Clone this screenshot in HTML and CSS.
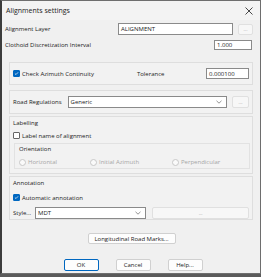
FILE: index.html
```html
<!DOCTYPE html>
<html lang="en">
<head>
    <meta charset="UTF-8">
    <title>Alignments settings</title>
    <link rel="stylesheet" href="styles.css">
</head>
<body>
    <div class="dialog">
        <div class="titlebar">
            <span class="title">Alignments settings</span>
            <svg class="close" width="8" height="8" viewBox="0 0 8 8"><path d="M0.5 0.5L7.5 7.5M7.5 0.5L0.5 7.5" stroke="#333" stroke-width="0.9"/></svg>
        </div>

        <div class="content">
            <div class="row row-layer">
                <span class="label">Alignment Layer</span>
                <div class="field layer-field">ALIGNMENT</div>
                <div class="btn dots off">...</div>
            </div>

            <div class="row row-clothoid">
                <span class="label">Clothoid Discretization Interval</span>
                <div class="field short-field">1.000</div>
            </div>

            <div class="group group-azimuth">
                <div class="check"><span class="box on"><svg width="7" height="7" viewBox="0 0 7 7"><path d="M1.3 3.6L2.8 5L5.7 1.9" fill="none" stroke="#fff" stroke-width="1"/></svg></span>Check Azimuth Continuity</div>
                <span class="tol-label">Tolerance</span>
                <div class="field tol-field">0.000100</div>
            </div>

            <div class="group group-road">
                <span class="label">Road Regulations</span>
                <div class="field combo road-combo">Generic<svg class="chev" width="6" height="4" viewBox="0 0 6 4"><path d="M0.5 0.8L3 3.2L5.5 0.8" fill="none" stroke="#777" stroke-width="0.8"/></svg></div>
                <div class="btn dots off">...</div>
            </div>

            <div class="group group-label">
                <div class="legend">Labelling</div>
                <div class="check"><span class="box"></span>Label name of alignment</div>
                <div class="subgroup">
                    <div class="legend">Orientation</div>
                    <div class="radios">
                        <div class="radio"><span class="dot"></span>Horizontal</div>
                        <div class="radio"><span class="dot"></span>Initial Azimuth</div>
                        <div class="radio"><span class="dot"></span>Perpendicular</div>
                    </div>
                </div>
            </div>

            <div class="group group-annot">
                <div class="legend">Annotation</div>
                <div class="check"><span class="box on"><svg width="7" height="7" viewBox="0 0 7 7"><path d="M1.3 3.6L2.8 5L5.7 1.9" fill="none" stroke="#fff" stroke-width="1"/></svg></span>Automatic annotation</div>
                <div class="style-row">
                    <span class="label">Style...</span>
                    <div class="field combo style-combo">MDT<svg class="chev" width="6" height="4" viewBox="0 0 6 4"><path d="M0.5 0.8L3 3.2L5.5 0.8" fill="none" stroke="#777" stroke-width="0.8"/></svg></div>
                    <div class="btn style-btn off">...</div>
                </div>
            </div>

            <div class="marks-row">
                <div class="btn marks-btn">Longitudinal Road Marks...</div>
            </div>

            <div class="actions">
                <div class="btn action default">OK</div>
                <div class="btn action">Cancel</div>
                <div class="btn action">Help...</div>
            </div>
        </div>
    </div>
</body>
</html>
```

FILE: styles.css
```css
* {
    margin: 0;
    padding: 0;
    box-sizing: border-box;
}

body {
    background: #5a5a5a;
    font-family: "Open Sans", "Noto Sans", sans-serif;
    font-size: 6px;
    color: #222;
}

.dialog {
    width: 261px;
    height: 274px;
    background: #f0f0f0;
    border: 1px solid #6e6e6e;
    border-left: 2px solid #3c3c3c;
    display: flex;
    flex-direction: column;
}

.titlebar {
    height: 19px;
    display: flex;
    align-items: center;
    justify-content: space-between;
    padding: 0 7px 0 4px;
    background: #f3f3f3;
}

.title {
    font-size: 7px;
}

.content {
    padding: 0 6px 0 3px;
    display: flex;
    flex-direction: column;
}

.row {
    display: flex;
    align-items: center;
}

.label {
    white-space: nowrap;
}

.row-layer {
    margin-top: 3px;
    height: 12px;
}

.row-clothoid {
    margin-top: 5px;
    height: 10px;
}

.field {
    background: #fff;
    border: 1px solid #8a8a8a;
    height: 100%;
    display: flex;
    align-items: center;
    padding-left: 2px;
    white-space: nowrap;
}

.layer-field {
    margin-left: auto;
    width: 115px;
}

.short-field {
    margin-left: auto;
    width: 38px;
    margin-right: 2px;
}

.btn {
    background: #fdfdfd;
    border: 1px solid #d0d0d0;
    border-radius: 2px;
    display: flex;
    align-items: center;
    justify-content: center;
    white-space: nowrap;
}

.btn.off {
    color: #a8a8a8;
    background: #f7f7f7;
    border-color: #e0e0e0;
}

.dots {
    width: 15px;
    height: 11px;
    margin-left: 5px;
    font-size: 5px;
}

.row-layer .dots {
    margin-right: 1px;
}

.group {
    border: 1px solid #dedede;
    background: #f2f2f2;
    margin-left: 4px;
    margin-right: 1px;
}

.group-azimuth {
    margin-top: 12px;
    height: 23px;
    display: flex;
    align-items: center;
    padding: 0 3px 0 3px;
}

.check {
    display: flex;
    align-items: center;
    white-space: nowrap;
}

.box {
    width: 7px;
    height: 7px;
    border: 1px solid #666;
    border-radius: 1px;
    background: #fff;
    margin-right: 2px;
    display: flex;
    align-items: center;
    justify-content: center;
}

.box.on {
    background: #0067c0;
    border-color: #0067c0;
}

.tol-label {
    margin-left: 43px;
}

.tol-field {
    margin-left: auto;
    width: 43px;
    height: 11px;
}

.group-road {
    margin-top: 5px;
    height: 24px;
    display: flex;
    align-items: center;
    padding: 0 3px 0 3px;
}

.combo {
    position: relative;
    height: 12px;
}

.chev {
    position: absolute;
    right: 4px;
    top: 3px;
}

.road-combo {
    margin-left: 6px;
    width: 161px;
}

.group-road .dots {
    height: 12px;
    width: 17px;
}

.group-label {
    margin-top: 2px;
    height: 58px;
    padding: 2px 3px 0 3px;
}

.legend {
    line-height: 9px;
}

.group-label > .check {
    margin-top: 3px;
    height: 9px;
}

.subgroup {
    margin-top: 3px;
    border: 1px solid #e2e2e2;
    height: 26px;
    padding: 1px 3px 0 4px;
    margin-left: 1px;
    margin-right: -1px;
}

.radios {
    display: flex;
    margin-top: 4px;
    color: #a6a6a6;
}

.radio {
    display: flex;
    align-items: center;
    width: 71px;
}

.radio:nth-child(2) {
    width: 82px;
}

.dot {
    width: 7px;
    height: 7px;
    border: 1px solid #c8c8c8;
    border-radius: 50%;
    background: #fafafa;
    margin-right: 2px;
}

.group-annot {
    margin-top: 2px;
    height: 44px;
    padding: 2px 3px 0 3px;
}

.group-annot > .check {
    margin-top: 5px;
    height: 9px;
}

.style-row {
    margin-top: 5px;
    display: flex;
    align-items: center;
    height: 12px;
}

.style-combo {
    margin-left: 4px;
    width: 113px;
}

.style-btn {
    margin-left: 6px;
    width: 98px;
    height: 12px;
    font-size: 5px;
}

.marks-row {
    display: flex;
    justify-content: center;
    margin-top: 13px;
}

.marks-btn {
    width: 88px;
    height: 11px;
    margin-left: 4px;
}

.actions {
    display: flex;
    justify-content: center;
    gap: 17px;
    margin-top: 15px;
    margin-left: 7px;
}

.action {
    width: 35px;
    height: 12px;
}

.action.default {
    border: 1px solid #0067c0;
}
```
